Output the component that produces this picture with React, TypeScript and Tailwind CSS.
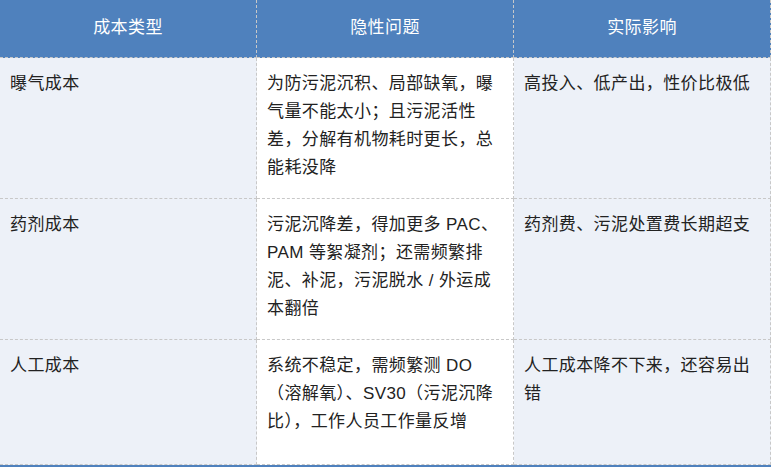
const rows = [
  {
    type: "曝气成本",
    issue: "为防污泥沉积、局部缺氧，曝气量不能太小；且污泥活性差，分解有机物耗时更长，总能耗没降",
    effect: "高投入、低产出，性价比极低",
    height: "h-[141px]",
  },
  {
    type: "药剂成本",
    issue: "污泥沉降差，得加更多 PAC、PAM 等絮凝剂；还需频繁排泥、补泥，污泥脱水 / 外运成本翻倍",
    effect: "药剂费、污泥处置费长期超支",
    height: "h-[141px]",
  },
  {
    type: "人工成本",
    issue: "系统不稳定，需频繁测 DO（溶解氧）、SV30（污泥沉降比），工作人员工作量反增",
    effect: "人工成本降不下来，还容易出错",
    height: "h-[125px]",
  },
];

const headers = ["成本类型", "隐性问题", "实际影响"];

export default function App() {
  return (
    <div
      className="h-[467px] w-[771px] overflow-hidden bg-white text-[17px] leading-[28px] tracking-[0.4px] text-[#222]"
      style={{ fontFamily: '"Liberation Sans", "Noto Sans CJK SC", sans-serif' }}
    >
      <div className="grid grid-cols-3 border-b-2 border-[#4f81bd]">
        {headers.map((h) => (
          <div
            key={h}
            className="flex h-[58px] items-center justify-center border-r border-b border-dashed border-[#c8c8c8] bg-[#4f81bd] pb-0.5 text-white"
          >
            {h}
          </div>
        ))}

        {rows.map((row) => (
          <div key={row.type} className="contents">
            <div
              className={`${row.height} border-r border-b border-dashed border-[#c8c8c8] bg-[#edf1f8] px-2.5 pt-3`}
            >
              {row.type}
            </div>
            <div
              className={`${row.height} border-r border-b border-dashed border-[#c8c8c8] bg-white px-2.5 pt-3`}
            >
              {row.issue}
            </div>
            <div
              className={`${row.height} border-r border-b border-dashed border-[#c8c8c8] bg-[#edf1f8] px-2.5 pt-3`}
            >
              {row.effect}
            </div>
          </div>
        ))}
      </div>
    </div>
  );
}
